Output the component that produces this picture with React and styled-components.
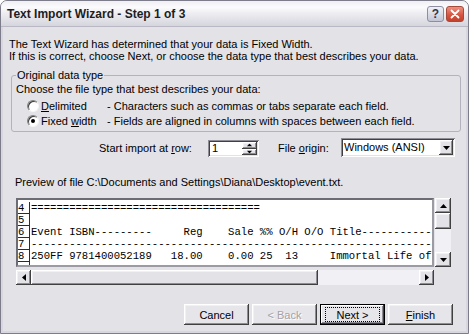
import React from "react";
import styled, { createGlobalStyle } from "styled-components";

const GlobalStyle = createGlobalStyle`
  html, body {
    margin: 0;
    padding: 0;
    background: #ffffff;
  }
  body {
    font-family: "Liberation Sans", Arial, sans-serif;
    font-size: 11px;
    color: #000;
  }
`;

const previewRows = [
  ["4", "=".repeat(36)],
  ["5", ""],
  ["6", "Event ISBN---------     Reg    Sale %% O/H O/O Title" + "-".repeat(30)],
  ["7", "-".repeat(90)],
  ["8", "250FF 9781400052189   18.00    0.00 25  13     Immortal Life of Henrietta"],
  ["", ""],
];

const Arrow = ({ dir }) => {
  const pts = {
    up: "0,4 3.5,0 7,4",
    down: "0,0 3.5,4 7,0",
    left: "4,0 0,3.5 4,7",
    right: "0,0 4,3.5 0,7",
  }[dir];
  const vertical = dir === "up" || dir === "down";
  return (
    <svg width={vertical ? 7 : 4} height={vertical ? 4 : 7} viewBox={vertical ? "0 0 7 4" : "0 0 4 7"}>
      <polygon points={pts} fill="#000" />
    </svg>
  );
};

const App = () => {
  return (
    <>
      <GlobalStyle />
      <Window>
        <TitleBar>
          <Title>Text Import Wizard - Step 1 of 3</Title>
          <CaptionButtons>
            <HelpButton>?</HelpButton>
            <CloseButton>
              <svg width="10" height="10" viewBox="0 0 10 10">
                <path d="M1.5 1.5 L8.5 8.5 M8.5 1.5 L1.5 8.5" stroke="#fff" strokeWidth="1.8" strokeLinecap="round" />
              </svg>
            </CloseButton>
          </CaptionButtons>
        </TitleBar>

        <Body>
          <Intro>
            The Text Wizard has determined that your data is Fixed Width.
            <br />
            If this is correct, choose Next, or choose the data type that best describes your data.
          </Intro>

          <GroupBox>
            <Legend>Original data type</Legend>
            <GroupText>Choose the file type that best describes your data:</GroupText>
            <RadioRow>
              <Radio />
              <RadioLabel>
                <u>D</u>elimited
              </RadioLabel>
              <span>- Characters such as commas or tabs separate each field.</span>
            </RadioRow>
            <RadioRow>
              <Radio $checked />
              <RadioLabel>
                Fixed <u>w</u>idth
              </RadioLabel>
              <span>- Fields are aligned in columns with spaces between each field.</span>
            </RadioRow>
          </GroupBox>

          <ImportRow>
            <FieldLabel $width={109}>
              Start import at <u>r</u>ow:
            </FieldLabel>
            <Spinner>
              <SpinValue>1</SpinValue>
              <SpinButtons>
                <SpinButton>
                  <Arrow dir="up" />
                </SpinButton>
                <SpinButton>
                  <Arrow dir="down" />
                </SpinButton>
              </SpinButtons>
            </Spinner>
            <FieldLabel $width={63} $gap={19}>
              File <u>o</u>rigin:
            </FieldLabel>
            <Select>
              <SelectValue>Windows (ANSI)</SelectValue>
              <DropButton>
                <Arrow dir="down" />
              </DropButton>
            </Select>
          </ImportRow>

          <PreviewLabel>Preview of file C:\Documents and Settings\Diana\Desktop\event.txt.</PreviewLabel>

          <PreviewGrid>
            <PreviewBox>
              {previewRows.map(([n, text], i) => (
                <PreviewRow key={i}>
                  <RowNumber>{n}</RowNumber>
                  <RowText>{text}</RowText>
                </PreviewRow>
              ))}
            </PreviewBox>
            <VScroll>
              <ScrollButton>
                <Arrow dir="up" />
              </ScrollButton>
              <Thumb $size={16} />
              <Track />
              <ScrollButton>
                <Arrow dir="down" />
              </ScrollButton>
            </VScroll>
            <HScroll>
              <ScrollButton>
                <Arrow dir="left" />
              </ScrollButton>
              <Thumb $size={287} />
              <Track />
              <ScrollButton>
                <Arrow dir="right" />
              </ScrollButton>
            </HScroll>
          </PreviewGrid>

          <ButtonRow>
            <Button>Cancel</Button>
            <Button disabled>&lt; Back</Button>
            <Button $default>
              <FocusRing>Next &gt;</FocusRing>
            </Button>
            <Button>
              <u>F</u>inish
            </Button>
          </ButtonRow>
        </Body>
      </Window>
    </>
  );
};

const raised = `
  box-shadow: inset -1px -1px #404040, inset 1px 1px #ffffff,
    inset -2px -2px #8e8d96, inset 2px 2px #f1f0f4;
`;

const sunken = `
  box-shadow: inset 1px 1px #8e8d96, inset -1px -1px #ffffff,
    inset 2px 2px #404040, inset -2px -2px #e3e2e7;
`;

const Window = styled.div`
  width: 469px;
  height: 334px;
  box-sizing: border-box;
  border: 1px solid #7d7c8a;
  border-radius: 7px 7px 0 0;
  background: #e3e2e7;
  display: flex;
  flex-direction: column;
  overflow: hidden;
`;

const TitleBar = styled.div`
  height: 25px;
  flex: none;
  display: flex;
  align-items: center;
  justify-content: space-between;
  padding: 0 4px 0 6px;
  background: linear-gradient(#f0f0f3 0%, #fbfbfc 25%, #e8e8ed 60%, #d5d5dd 100%);
  border-bottom: 1px solid #b9b8c4;
`;

const Title = styled.div`
  font-weight: bold;
  font-size: 12px;
  color: #1d1d22;
  padding-top: 1px;
`;

const CaptionButtons = styled.div`
  display: flex;
  gap: 2px;
  padding-top: 1px;
`;

const CaptionButton = styled.div`
  width: 17px;
  height: 16px;
  box-sizing: border-box;
  border-radius: 3px;
  display: flex;
  align-items: center;
  justify-content: center;
`;

const HelpButton = styled(CaptionButton)`
  background: linear-gradient(#f0f1f7, #c3c5d5);
  border: 1px solid #8d8ea4;
  color: #34364a;
  font-weight: bold;
  font-size: 12px;
`;

const CloseButton = styled(CaptionButton)`
  width: 18px;
  background: linear-gradient(#ef8f7f, #d4523e 60%, #c3402c);
  border: 1px solid #a5493d;
`;

const Body = styled.div`
  flex: 1;
  display: flex;
  flex-direction: column;
  box-sizing: border-box;
  padding: 0 5px 0 6px;
  border: 2px solid #d8d7df;
  border-top: none;
`;

const Intro = styled.p`
  margin: 11px 0 0;
  line-height: 12px;
`;

const GroupBox = styled.fieldset`
  margin: 7px 0 0 2px;
  padding: 0 4px 3px;
  border: 1px solid #b3b2bd;
  border-radius: 3px;
`;

const Legend = styled.legend`
  padding: 0 1px;
  line-height: 12px;
`;

const GroupText = styled.div`
  margin: 2px 0 3px;
  line-height: 12px;
`;

const RadioRow = styled.div`
  display: flex;
  align-items: center;
  height: 15px;
`;

const Radio = styled.span`
  width: 12px;
  height: 12px;
  box-sizing: border-box;
  margin: 0 2px 0 11px;
  border-radius: 50%;
  border: 1px solid;
  border-color: #808080 #f6f6f6 #f6f6f6 #808080;
  background: #fff;
  box-shadow: inset 1px 1px #3c3c3c;
  display: flex;
  align-items: center;
  justify-content: center;
  &::after {
    content: "";
    width: 4px;
    height: 4px;
    border-radius: 50%;
    background: ${(p) => (p.$checked ? "#000" : "transparent")};
  }
`;

const RadioLabel = styled.span`
  width: 66px;
`;

const ImportRow = styled.div`
  display: flex;
  align-items: flex-end;
  margin-top: 6px;
  padding-left: 90px;
  height: 19px;
`;

const FieldLabel = styled.div`
  width: ${(p) => p.$width}px;
  margin-left: ${(p) => p.$gap || 0}px;
  line-height: 17px;
`;

const Spinner = styled.div`
  width: 51px;
  height: 17px;
  box-sizing: border-box;
  background: #fff;
  ${sunken}
  display: flex;
  padding: 2px;
`;

const SpinValue = styled.div`
  flex: 1;
  padding-left: 2px;
  line-height: 13px;
`;

const SpinButtons = styled.div`
  width: 15px;
  display: flex;
  flex-direction: column;
`;

const SpinButton = styled.div`
  flex: 1;
  background: #e3e2e7;
  ${raised}
  display: flex;
  align-items: center;
  justify-content: center;
  svg {
    transform: scale(0.8);
  }
`;

const Select = styled.div`
  width: 114px;
  height: 19px;
  box-sizing: border-box;
  background: #fff;
  ${sunken}
  display: flex;
  padding: 2px;
`;

const SelectValue = styled.div`
  flex: 1;
  padding-left: 1px;
  line-height: 14px;
`;

const DropButton = styled.div`
  width: 14px;
  background: #e3e2e7;
  ${raised}
  display: flex;
  align-items: center;
  justify-content: center;
`;

const PreviewLabel = styled.div`
  margin: 19px 0 0 6px;
  line-height: 12px;
`;

const PreviewGrid = styled.div`
  display: grid;
  grid-template-columns: 418px 16px;
  grid-template-rows: 69px 15px;
  column-gap: 1px;
  row-gap: 3px;
  margin: 10px 0 0 7px;
`;

const PreviewBox = styled.div`
  box-sizing: border-box;
  border: 2px solid;
  border-color: #6c6c74 #9c9ba4 #9c9ba4 #6c6c74;
  background: #fff;
  padding-top: 2px;
  overflow: hidden;
  font-family: "Liberation Mono", "Courier New", monospace;
  font-size: 10.6px;
`;

const PreviewRow = styled.div`
  display: flex;
  height: 12px;
`;

const RowNumber = styled.div`
  width: 11px;
  flex: none;
  border-right: 1px solid #2d2d2d;
  border-bottom: 1px solid #2d2d2d;
  line-height: 12px;
`;

const RowText = styled.div`
  white-space: pre;
  line-height: 12px;
  padding-left: 1px;
`;

const ScrollBar = styled.div`
  display: flex;
  background: #f1f0f5;
`;

const VScroll = styled(ScrollBar)`
  flex-direction: column;
`;

const HScroll = styled(ScrollBar)`
  flex-direction: row;
`;

const ScrollButton = styled.div`
  width: 15px;
  height: 15px;
  flex: none;
  background: #e3e2e7;
  ${raised}
  display: flex;
  align-items: center;
  justify-content: center;
  ${VScroll} & {
    width: 16px;
  }
`;

const Thumb = styled.div`
  flex: none;
  flex-basis: ${(p) => p.$size}px;
  background: #e3e2e7;
  ${raised}
`;

const Track = styled.div`
  flex: 1;
`;

const ButtonRow = styled.div`
  display: flex;
  justify-content: flex-end;
  gap: 3px;
  margin-top: 19px;
  padding-right: 8px;
`;

const Button = styled.div`
  width: 65px;
  height: 21px;
  box-sizing: border-box;
  background: #e6e5ea;
  ${raised}
  display: flex;
  align-items: center;
  justify-content: center;
  color: ${(p) => (p.disabled ? "#a3a2aa" : "#000")};
  text-shadow: ${(p) => (p.disabled ? "1px 1px #fff" : "none")};
  ${(p) =>
    p.$default &&
    `
    border: 1px solid #000;
    box-shadow: inset -1px -1px #404040, inset 1px 1px #ffffff,
      inset -2px -2px #8e8d96;
  `}
`;

const FocusRing = styled.div`
  width: 53px;
  height: 13px;
  border: 1px dotted #000;
  display: flex;
  align-items: center;
  justify-content: center;
`;

export default App;
